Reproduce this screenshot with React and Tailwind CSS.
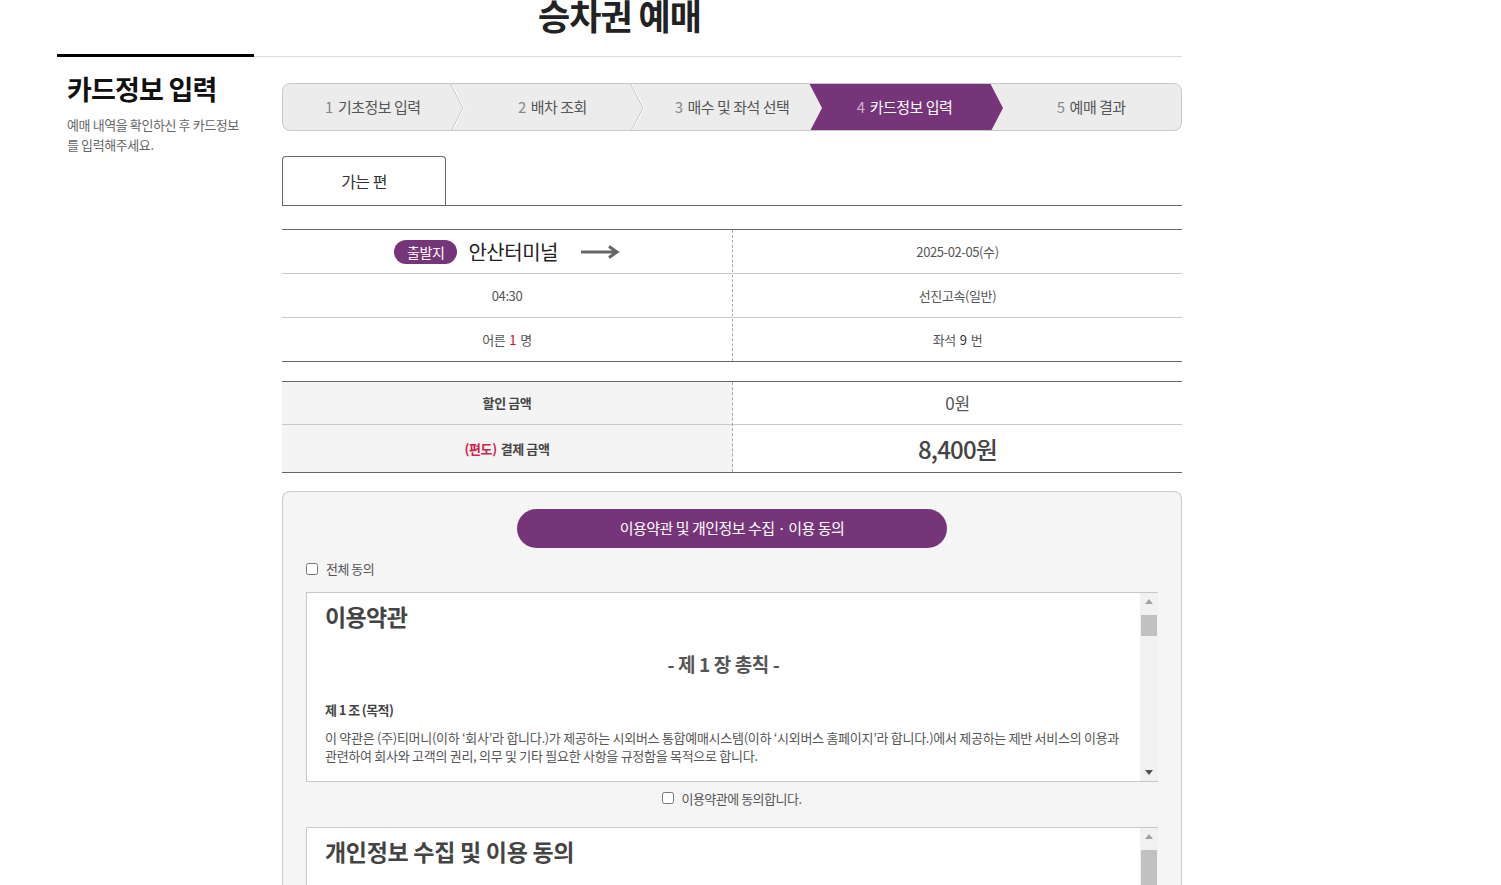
import React from "react";

const steps = [
  { no: "1", label: "기초정보 입력" },
  { no: "2", label: "배차 조회" },
  { no: "3", label: "매수 및 좌석 선택" },
  { no: "4", label: "카드정보 입력", active: true },
  { no: "5", label: "예매 결과" },
];

const StepBar = () => (
  <div className="relative h-[48px] rounded-[8px] border border-[#c8c8c8] bg-[#ececec] overflow-hidden">
    {/* chevrons */}
    <svg className="absolute inset-0" width="900" height="48" viewBox="0 0 900 48">
      <polygon points="526,-1 707,-1 720,24 707,49 526,49 539,24" fill="#773579" />
      <polyline points="167,-1 180,24 167,49" fill="none" stroke="#ffffff" strokeWidth="1" transform="translate(1,0)" />
      <polyline points="167,-1 180,24 167,49" fill="none" stroke="#c8c8c8" strokeWidth="1" />
      <polyline points="347,-1 360,24 347,49" fill="none" stroke="#ffffff" strokeWidth="1" transform="translate(1,0)" />
      <polyline points="347,-1 360,24 347,49" fill="none" stroke="#c8c8c8" strokeWidth="1" />
    </svg>
    <div className="relative grid grid-cols-5 h-full">
      {steps.map((s) => (
        <div
          key={s.no}
          className={`flex items-center justify-center text-[15px] tracking-[-0.5px] ${
            s.active ? "text-white pr-[14px]" : "text-[#555]"
          }`}
        >
          <span className={s.active ? "text-[#c9b3ca] mr-[5px]" : "text-[#888] mr-[5px]"}>{s.no}</span>
          {s.label}
        </div>
      ))}
    </div>
  </div>
);

// one cell of the two-column tables
const Row = ({ children, h, last, className = "" }) => (
  <div className={`${h} flex items-center justify-center ${last ? "" : "border-b border-[#c8c8c8]"} ${className}`}>
    {children}
  </div>
);

const Scrollbar = ({ thumbTop = 22, thumbH = 21, showDown = true }) => (
  <div className="w-[18px] bg-[#f1f1f1] flex flex-col items-center shrink-0">
    <div className="h-[17px] flex items-center justify-center">
      <svg width="8" height="5" viewBox="0 0 8 5"><polygon points="4,0 8,5 0,5" fill="#a3a3a3" /></svg>
    </div>
    <div className="flex-1 w-full px-[1px]">
      <div className="w-full bg-[#c1c1c1]" style={{ marginTop: thumbTop - 17, height: thumbH }} />
    </div>
    {showDown && (
      <div className="h-[17px] flex items-center justify-center">
        <svg width="8" height="5" viewBox="0 0 8 5"><polygon points="0,0 8,0 4,5" fill="#505050" /></svg>
      </div>
    )}
  </div>
);

export default function App() {
  return (
    <div className="min-h-screen bg-white text-[#333]" style={{ fontFamily: "'Noto Sans CJK KR', 'Noto Sans', sans-serif" }}>
      <div className="ml-[57px] w-[1125px]">
        <h1 className="-mt-[5px] h-[59px] text-center text-[35px] leading-[40px] font-bold tracking-[-1px] text-[#222]">
          승차권 예매
        </h1>
        <div className="flex items-end h-[3px]">
          <div className="w-[197px] h-[3px] bg-black" />
          <div className="flex-1 h-px bg-[#ddd]" />
        </div>

        <div className="flex">
          {/* sidebar */}
          <aside className="w-[197px] pl-[10px] pt-[14px] shrink-0">
            <h2 className="text-[27px] leading-[36px] font-bold tracking-[-0.8px] text-[#111]">카드정보 입력</h2>
            <p className="mt-[8px] w-[180px] text-[13px] leading-[20px] tracking-[-0.4px] text-[#666]">
              예매 내역을 확인하신 후 카드정보를 입력해주세요.
            </p>
          </aside>

          {/* main */}
          <main className="ml-[28px] w-[900px] pt-[26px]">
            <StepBar />

            {/* tab */}
            <div className="mt-[25px] flex border-b border-[#666]">
              <div className="w-[164px] h-[49px] border border-b-0 border-[#666] rounded-t-[4px] flex items-center justify-center text-[16px] text-[#333] tracking-[-0.5px]">
                가는 편
              </div>
            </div>

            {/* trip info */}
            <div className="mt-[23px] border-t border-b border-[#666] flex text-[13px] text-[#555] tracking-[-0.4px]">
              <div className="w-[451px] border-r border-dashed border-[#aaa]">
                <Row h="h-[44px]">
                  <span className="h-[24px] px-[13px] rounded-full bg-[#773579] text-white text-[14px] leading-[24px]">출발지</span>
                  <span className="ml-[11px] text-[20px] text-[#222] tracking-[-0.5px]">안산터미널</span>
                  <svg className="ml-[23px]" width="39" height="14" viewBox="0 0 39 14">
                    <path d="M0 7 H35 M28 1.5 L36 7 L28 12.5" fill="none" stroke="#666" strokeWidth="3" />
                  </svg>
                </Row>
                <Row h="h-[44px]">04:30</Row>
                <Row h="h-[43px]" last>
                  어른 <span className="mx-[4px] text-[#c8102e]">1</span> 명
                </Row>
              </div>
              <div className="flex-1">
                <Row h="h-[44px]">2025-02-05(수)</Row>
                <Row h="h-[44px]">선진고속(일반)</Row>
                <Row h="h-[43px]" last>
                  좌석 <span className="mx-[4px] text-[#333]">9</span>번
                </Row>
              </div>
            </div>

            {/* price */}
            <div className="mt-[19px] border-t border-b border-[#666] flex tracking-[-0.4px]">
              <div className="w-[451px] bg-[#f4f4f4] border-r border-dashed border-[#aaa] text-[13px] font-bold text-[#444]">
                <Row h="h-[43px]">할인 금액</Row>
                <Row h="h-[47px]" last>
                  <span className="text-[#d0234d] mr-[4px]">(편도)</span> 결제 금액
                </Row>
              </div>
              <div className="flex-1">
                <Row h="h-[43px]" className="text-[17px] text-[#555]">0원</Row>
                <Row h="h-[47px]" last className="text-[24px] font-medium text-[#444] tracking-[-0.8px]">8,400원</Row>
              </div>
            </div>

            {/* terms */}
            <section className="mt-[18px] rounded-t-[8px] border border-[#ccc] border-b-0 bg-[#f5f5f5] px-[23px] pt-[17px] h-[400px]">
              <div className="flex justify-center">
                <button className="w-[430px] h-[39px] rounded-full bg-[#773579] text-white text-[15px] tracking-[-0.5px]">
                  이용약관 및 개인정보 수집 · 이용 동의
                </button>
              </div>
              <label className="mt-[11px] flex items-center gap-[8px] text-[13px] text-[#555] tracking-[-0.5px]">
                <input type="checkbox" className="w-[12px] h-[12px] m-0" />
                전체 동의
              </label>

              <div className="mt-[13px] h-[190px] flex bg-white border border-[#c8c8c8] border-r-0">
                <div className="flex-1 pl-[18px] pt-[6px] overflow-hidden">
                  <h3 className="text-[23px] leading-[34px] font-bold text-[#444] tracking-[-0.6px]">이용약관</h3>
                  <p className="mt-[17px] -ml-[18px] text-center text-[19px] font-bold text-[#555] tracking-[-0.4px]">- 제 1 장 총칙 -</p>
                  <p className="mt-[22px] text-[13px] font-bold text-[#444] tracking-[-0.6px]">제 1 조 (목적)</p>
                  <p className="mt-[9px] text-[13px] leading-[18px] text-[#555] tracking-[-0.28px] whitespace-nowrap">
                    이 약관은 (주)티머니(이하 ‘회사’라 합니다.)가 제공하는 시외버스 통합예매시스템(이하 ‘시외버스 홈페이지’라 합니다.)에서 제공하는 제반 서비스의 이용과
                    <br />
                    관련하여 회사와 고객의 권리, 의무 및 기타 필요한 사항을 규정함을 목적으로 합니다.
                  </p>
                </div>
                <Scrollbar thumbTop={22} thumbH={21} />
              </div>

              <label className="mt-[7px] flex items-center justify-center gap-[7px] text-[13px] text-[#555] tracking-[-0.5px]">
                <input type="checkbox" className="w-[12px] h-[12px] m-0" />
                이용약관에 동의합니다.
              </label>

              <div className="mt-[19px] h-[120px] flex bg-white border border-[#c8c8c8] border-r-0">
                <div className="flex-1 pl-[18px] pt-[6px] overflow-hidden">
                  <h3 className="text-[23px] leading-[34px] font-bold text-[#444] tracking-[-0.3px]">개인정보 수집 및 이용 동의</h3>
                </div>
                <Scrollbar thumbTop={22} thumbH={60} showDown={false} />
              </div>
            </section>
          </main>
        </div>
      </div>
    </div>
  );
}
